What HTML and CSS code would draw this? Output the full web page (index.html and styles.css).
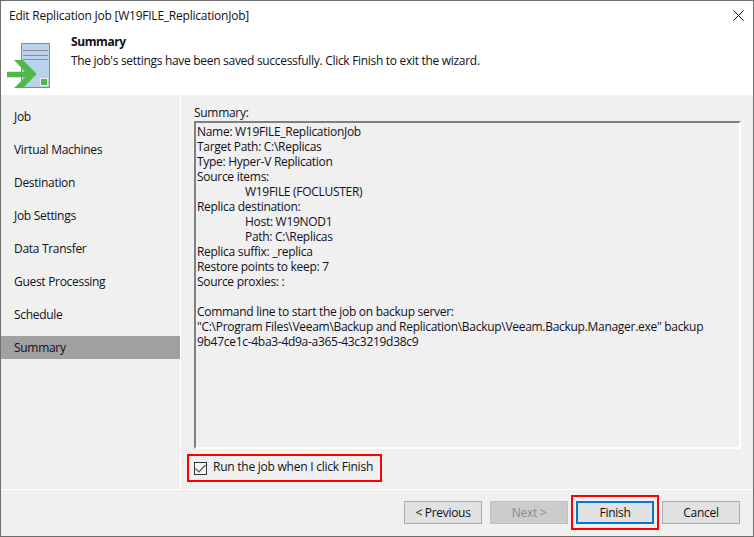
FILE: index.html
```html
<!DOCTYPE html>
<html lang="en">
<head>
<meta charset="utf-8">
<title>Edit Replication Job</title>
<link rel="stylesheet" href="styles.css">
</head>
<body>
<div class="window">
  <div class="titlebar">
    <span class="title">Edit Replication Job [W19FILE_ReplicationJob]</span>
    <svg class="close" width="11" height="11" viewBox="0 0 11 11"><path d="M0.5 0.5L10.5 10.5M10.5 0.5L0.5 10.5" stroke="#111" stroke-width="1" fill="none"/></svg>
  </div>
  <header class="banner">
    <svg class="logo" width="44" height="46" viewBox="0 0 44 46">
      <rect x="14.500" y="0.500" width="28" height="44" fill="#b9d3ec" stroke="#8a8a8a"/>
      <path d="M16 7.500H41M16 12.500H41M16 16.500H41" stroke="#8c9096" stroke-width="1" fill="none"/>
      <rect x="33.500" y="35.500" width="7" height="7" fill="#4fb848" stroke="#e8f1f8"/>
      <path d="M7 17H16L29.700 31L16 45H7L18 34.300H0V28.700H18Z" fill="#4fb848"/>
    </svg>
    <div class="banner-text">
      <div class="banner-title">Summary</div>
      <div class="banner-sub">The job's settings have been saved successfully. Click Finish to exit the wizard.</div>
    </div>
  </header>
  <div class="middle">
    <nav class="nav">
      <div class="nav-item">Job</div>
      <div class="nav-item">Virtual Machines</div>
      <div class="nav-item">Destination</div>
      <div class="nav-item">Job Settings</div>
      <div class="nav-item">Data Transfer</div>
      <div class="nav-item">Guest Processing</div>
      <div class="nav-item">Schedule</div>
      <div class="nav-item active">Summary</div>
    </nav>
    <main class="content">
      <div class="label">Summary:</div>
      <div class="textbox">
        <div>Name: W19FILE_ReplicationJob</div>
        <div>Target Path: C:\Replicas</div>
        <div>Type: Hyper-V Replication</div>
        <div>Source items:</div>
        <div class="ind">W19FILE (FOCLUSTER)</div>
        <div>Replica destination:</div>
        <div class="ind">Host: W19NOD1</div>
        <div class="ind">Path: C:\Replicas</div>
        <div>Replica suffix: _replica</div>
        <div>Restore points to keep: 7</div>
        <div>Source proxies: :</div>
        <div>&nbsp;</div>
        <div>Command line to start the job on backup server:</div>
        <div>"C:\Program Files\Veeam\Backup and Replication\Backup\Veeam.Backup.Manager.exe" backup</div>
        <div>9b47ce1c-4ba3-4d9a-a365-43c3219d38c9</div>
      </div>
      <label class="run">
        <span class="check"><svg width="11" height="9" viewBox="0 0 11 9"><path d="M0.500 4.500L4 8L10.500 1" stroke="#555" stroke-width="1.200" fill="none"/></svg></span>
        <span class="run-text">Run the job when I click Finish</span>
      </label>
    </main>
  </div>
  <footer class="footer">
    <div class="btn">&lt; Previous</div>
    <div class="btn disabled">Next &gt;</div>
    <div class="btn primary">Finish</div>
    <div class="btn">Cancel</div>
  </footer>
</div>
</body>
</html>
```
FILE: styles.css
```css
* { box-sizing: border-box; }
html, body { margin: 0; padding: 0; }
body {
  width: 754px;
  height: 537px;
  overflow: hidden;
  font-family: "Open Sans", "Noto Sans", sans-serif;
  font-size: 12px;
  color: #101020;
}
.window {
  width: 754px;
  height: 537px;
  display: flex;
  flex-direction: column;
  border: 1px solid #6e6e6e;
  background: #f0f0f0;
}
.titlebar {
  height: 29px;
  flex: none;
  background: #fff;
  display: flex;
  align-items: center;
  justify-content: space-between;
  padding: 0 9px 0 8px;
}
.title { letter-spacing: -0.23px; }
.banner {
  height: 65px;
  flex: none;
  background: #fff;
  display: flex;
  align-items: flex-start;
}
.logo { flex: none; margin: 13px 0 0 6px; }
.banner-text { margin-left: 20px; padding-top: 2px; }
.banner-title { font-weight: 700; line-height: 19px; letter-spacing: -0.4px; }
.banner-sub { line-height: 18px; margin-top: 1px; letter-spacing: -0.3px; }
.middle { flex: 1; display: flex; min-height: 0; }
.nav {
  width: 179px;
  flex: none;
  padding-top: 10px;
  display: flex;
  flex-direction: column;
  gap: 10px;
  border-bottom: 1px solid #fff;
}
.nav-item {
  height: 23px;
  line-height: 23px;
  padding-left: 13px;
  letter-spacing: -0.3px;
}
.nav-item.active { background: #a0a0a0; }
.content {
  flex: 1;
  border-left: 1px solid #fff;
  border-bottom: 1px solid #fff;
  padding: 10px 12px 6px 13px;
  display: flex;
  flex-direction: column;
}
.label { line-height: 16px; letter-spacing: -0.3px; }
.textbox {
  height: 328px;
  flex: none;
  border: 2px solid #fff;
  border-top-color: #808080;
  border-left-color: #808080;
  padding: 1px 1px 0 1px;
  line-height: 15px;
  letter-spacing: -0.29px;
}
.ind { padding-left: 48px; }
.run {
  display: flex;
  align-items: center;
  gap: 6px;
  width: 195px;
  height: 28px;
  margin: 5px 0 0 -7px;
  padding-left: 5px;
  border: 2px solid #f00;
  letter-spacing: -0.24px;
}
.run-text { line-height: 16px; margin-bottom: 2px; }
.check {
  width: 13px;
  height: 13px;
  border: 1px solid #333;
  background: #f4f4f4;
  display: flex;
  align-items: center;
  justify-content: center;
}
.footer {
  flex: none;
  height: 46px;
  display: flex;
  justify-content: flex-end;
  align-items: flex-start;
  gap: 8px;
  padding: 11px 13px 0 0;
}
.btn {
  width: 78px;
  height: 23px;
  line-height: 21px;
  text-align: center;
  border: 1px solid #adadad;
  background: #e1e1e1;
  letter-spacing: -0.3px;
  position: relative;
}
.btn.disabled { background: #cccccc; border-color: #bfbfbf; color: #8a8a8a; }
.btn.primary { border: 2px solid #0078d7; line-height: 19px; }
.btn.primary::after {
  content: "";
  position: absolute;
  inset: -8px -7px;
  border: 2px solid #f00;
}
```
